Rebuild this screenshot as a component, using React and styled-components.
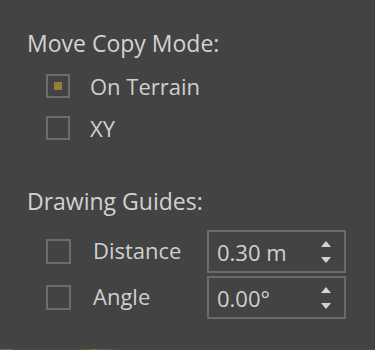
import React from "react";
import styled, { createGlobalStyle } from "styled-components";

const Global = createGlobalStyle`
  html, body { margin: 0; padding: 0; background: #434343; }
  body { font-family: "Open Sans", "Noto Sans", sans-serif; }
`;

const Panel = styled.div`
  width: 375px;
  height: 350px;
  box-sizing: border-box;
  background: #434343;
  padding: 28px 0 0 27px;
  display: flex;
  flex-direction: column;
  position: relative;
  overflow: hidden;
  color: #d0d0d0;
`;

const Title = styled.div`
  font-size: 23px;
  line-height: 30px;
  color: #d2d2d2;
  margin-top: ${(p) => p.$mt || 0}px;
  margin-bottom: ${(p) => p.$mb || 0}px;
`;

const List = styled.div`
  display: flex;
  flex-direction: column;
  gap: ${(p) => p.$gap || 0}px;
  padding-left: 19px;
`;

const Row = styled.div`
  display: flex;
  align-items: center;
  height: ${(p) => p.$h}px;
`;

const Box = styled.div`
  width: ${(p) => p.$size}px;
  height: ${(p) => p.$size}px;
  box-sizing: border-box;
  border: 2px solid #6c6c6c;
  display: flex;
  align-items: center;
  justify-content: center;
  flex-shrink: 0;
`;

const Dot = styled.div`
  width: 8px;
  height: 8px;
  background: #9b7b3b;
`;

const Label = styled.div`
  font-size: 22px;
  line-height: 30px;
  color: #d0d0d0;
  margin-left: ${(p) => p.$ml}px;
  margin-bottom: ${(p) => p.$lift || 0}px;
  width: ${(p) => (p.$w ? `${p.$w}px` : "auto")};
`;

const Field = styled.div`
  width: 139px;
  height: 43px;
  box-sizing: border-box;
  border: 2px solid #6a6a6a;
  display: flex;
  align-items: center;
  padding: 0 0 0 8px;
  font-size: 22px;
  line-height: 30px;
  color: #d0d0d0;
`;

const Value = styled.div`
  flex: 1;
`;

const Spin = styled.div`
  width: 26px;
  height: 100%;
  display: flex;
  flex-direction: column;
  align-items: center;
  justify-content: center;
  gap: 10px;
  margin-right: 5px;
`;

const Strip = styled.div`
  position: absolute;
  left: 0;
  right: 0;
  bottom: 0;
  height: 1px;
  background: linear-gradient(90deg, #6a6a6a 0 3%, #4c4c44 3% 22%, #5e5e3a 22% 24%, #777744 24% 26%, #5a5a5a 26% 30%, #4a4a4a 30% 100%);
`;

const Up = () => (
  <svg width="10" height="6" viewBox="0 0 10 6">
    <polygon points="5,0 10,6 0,6" fill="#d4d4d4" />
  </svg>
);
const Down = () => (
  <svg width="10" height="6" viewBox="0 0 10 6">
    <polygon points="0,0 10,0 5,6" fill="#d4d4d4" />
  </svg>
);

const Check = ({ checked, size }) => <Box $size={size}>{checked && <Dot />}</Box>;

const Spinner = ({ value }) => (
  <Field>
    <Value>{value}</Value>
    <Spin>
      <Up />
      <Down />
    </Spin>
  </Field>
);

export default function App() {
  return (
    <>
      <Global />
      <Panel>
        <Title $mb={7}>Move Copy Mode:</Title>
        <List>
          <Row $h={42}>
            <Check size={24} checked />
            <Label $ml={20}>On Terrain</Label>
          </Row>
          <Row $h={42}>
            <Check size={24} />
            <Label $ml={20}>XY</Label>
          </Row>
        </List>
        <Title $mt={37} $mb={14}>Drawing Guides:</Title>
        <List $gap={3}>
          <Row $h={43}>
            <Check size={25} />
            <Label $ml={22} $w={114} $lift={4}>Distance</Label>
            <Spinner value="0.30 m" />
          </Row>
          <Row $h={43}>
            <Check size={25} />
            <Label $ml={22} $w={114} $lift={4}>Angle</Label>
            <Spinner value="0.00°" />
          </Row>
        </List>
        <Strip />
      </Panel>
    </>
  );
}
